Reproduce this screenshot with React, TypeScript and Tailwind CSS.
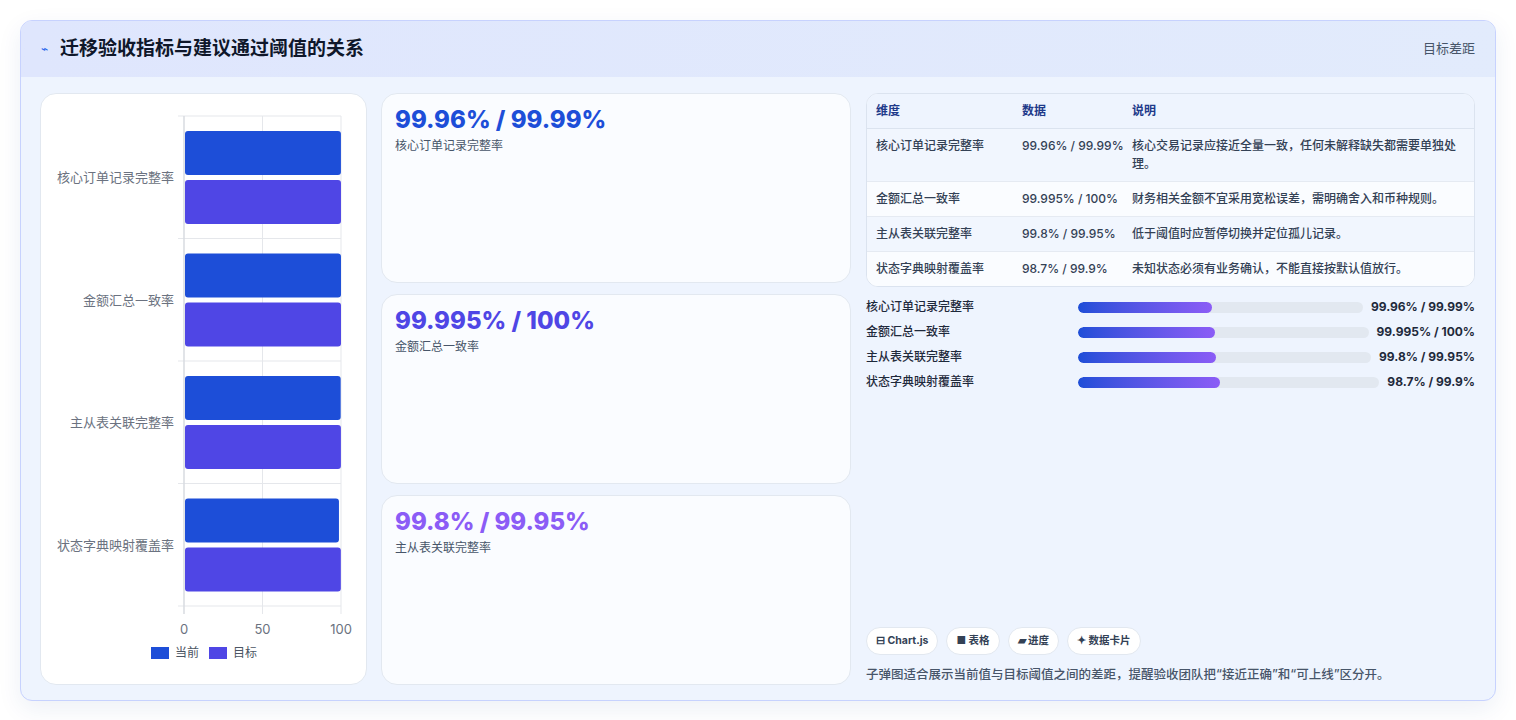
const metrics = [
  { name: '核心订单记录完整率', cur: 99.96, tgt: 99.99, data: '99.96% / 99.99%', note: '核心交易记录应接近全量一致，任何未解释缺失都需要单独处理。' },
  { name: '金额汇总一致率', cur: 99.995, tgt: 100, data: '99.995% / 100%', note: '财务相关金额不宜采用宽松误差，需明确舍入和币种规则。' },
  { name: '主从表关联完整率', cur: 99.8, tgt: 99.95, data: '99.8% / 99.95%', note: '低于阈值时应暂停切换并定位孤儿记录。' },
  { name: '状态字典映射覆盖率', cur: 98.7, tgt: 99.9, data: '98.7% / 99.9%', note: '未知状态必须有业务确认，不能直接按默认值放行。' },
]

const font = { fontFamily: 'Inter, "Noto Sans CJK SC", sans-serif' }

function BarChart() {
  const x0 = 143, x1 = 300
  const top = 22, group = 122.5
  const sx = (v: number) => x0 + ((x1 - x0) * v) / 100
  return (
    <svg width="326" height="590" className="block">
      {[0, 50, 100].map((t) => (
        <line key={t} x1={sx(t)} x2={sx(t)} y1={top} y2={top + group * 4 + 8} stroke="#e5e7eb" />
      ))}
      {[0, 1, 2, 3, 4].map((i) => (
        <line key={i} x1={x0 - 6} x2={x1} y1={top + group * i} y2={top + group * i} stroke="#e5e7eb" />
      ))}
      <line x1={x0} x2={x0} y1={top} y2={top + group * 4 + 8} stroke="#d1d5db" />
      {metrics.map((m, i) => {
        const y = top + group * i
        return (
          <g key={m.name}>
            <rect x={x0 + 1} y={y + 15} width={sx(m.cur) - x0 - 1} height={44} rx={3} fill="#1d4ed8" />
            <rect x={x0 + 1} y={y + 64} width={sx(m.tgt) - x0 - 1} height={44} rx={3} fill="#4f46e5" />
            <text x={x0 - 10} y={y + 66} textAnchor="end" fontSize="13" fill="#6b7280" style={font}>{m.name}</text>
          </g>
        )
      })}
      {[0, 50, 100].map((t) => (
        <text key={t} x={sx(t)} y={top + group * 4 + 28} textAnchor="middle" fontSize="13" fill="#6b7280" style={font}>{t}</text>
      ))}
      <rect x={110} y={553} width={18} height={12} fill="#1d4ed8" />
      <text x={134} y={563} fontSize="12" fill="#4b5563" style={font}>当前</text>
      <rect x={168} y={553} width={18} height={12} fill="#4f46e5" />
      <text x={192} y={563} fontSize="12" fill="#4b5563" style={font}>目标</text>
    </svg>
  )
}

const cardColors = ['text-[#1d4ed8]', 'text-[#4f46e5]', 'text-[#8b5cf6]']

export default function App() {
  return (
    <div className="bg-white w-[1516px] h-[720px] pt-5 px-5" style={font}>
      <div className="w-[1476px] h-[681px] rounded-xl border border-[#c7d2fe] bg-[#eef4fe] overflow-hidden flex flex-col shadow-[0_8px_24px_rgba(30,58,138,0.08)]">
        <div className="h-[56px] shrink-0 flex items-center justify-between px-5 bg-gradient-to-r from-[#dfe6fd] to-[#e2ebfc]">
          <div className="flex items-center gap-3">
            <span className="text-[#2563eb] text-[12px]">⌁</span>
            <h1 className="text-[19px] font-bold text-[#0f172a]">迁移验收指标与建议通过阈值的关系</h1>
          </div>
          <span className="text-[13px] text-[#475569]">目标差距</span>
        </div>
        <div className="flex-1 flex gap-[14px] pl-[19px] pr-5 pt-4 pb-[18px]">
          <div className="w-[327px] bg-white rounded-2xl border border-[#e2e8f0] overflow-hidden">
            <BarChart />
          </div>
          <div className="w-[470px] flex flex-col gap-[11px]">
            {metrics.slice(0, 3).map((m, i) => (
              <div key={m.name} className="flex-1 bg-[#fafcff] rounded-2xl border border-[#e2e8f0] px-[13px] pt-[11px]">
                <div className={`text-[24px] leading-[30px] font-extrabold ${cardColors[i]}`}>{m.data}</div>
                <div className="text-[12px] text-[#475569] mt-0.5">{m.name}</div>
              </div>
            ))}
          </div>
          <div className="flex-1 flex flex-col pl-[1px]">
            <div className="rounded-xl border border-[#dbe3ef] bg-white overflow-hidden">
              <table className="w-full text-[12px] text-left table-fixed">
                <thead>
                  <tr className="bg-[#eef4fe] text-[#1e3a8a] font-bold border-b border-[#dbe3ef]">
                    <th className="py-[8px] pl-[9px] w-[155px]">维度</th>
                    <th className="py-[8px] w-[110px]">数据</th>
                    <th className="py-[8px] pr-3">说明</th>
                  </tr>
                </thead>
                <tbody className="text-[#334155] font-medium">
                  {metrics.map((m, i) => (
                    <tr key={m.name} className={`${i % 2 === 0 ? 'bg-[#f1f6fe]' : 'bg-[#fafcff]'} border-t border-[#e5eaf2] leading-[18px]`}>
                      <td className="py-[8px] pl-[9px] align-top">{m.name}</td>
                      <td className="py-[8px] align-top pr-2">{m.data}</td>
                      <td className="py-[8px] align-top pr-4">{m.note}</td>
                    </tr>
                  ))}
                </tbody>
              </table>
            </div>
            <div className="mt-[12px] flex flex-col gap-[9px]">
              {metrics.map((m) => (
                <div key={m.name} className="flex items-center h-[16px] text-[12px] text-[#1e293b]">
                  <span className="w-[212px] shrink-0 font-medium">{m.name}</span>
                  <div className="flex-1 h-[11px] rounded-full bg-[#e2e8f0] overflow-hidden">
                    <div className="h-full w-[47%] rounded-full bg-gradient-to-r from-[#1d4ed8] to-[#8b5cf6]" />
                  </div>
                  <span className="ml-2 font-bold">{m.data}</span>
                </div>
              ))}
            </div>
            <div className="mt-auto flex gap-2">
              {['⊟ Chart.js', '■ 表格', '▰ 进度', '✦ 数据卡片'].map((c) => (
                <span key={c} className="h-[28px] px-[9px] flex items-center rounded-full bg-white border border-[#e2e8f0] text-[10.5px] font-bold text-[#334155]">{c}</span>
              ))}
            </div>
            <p className="mt-[11px] text-[12.5px] text-[#475569] font-medium">子弹图适合展示当前值与目标阈值之间的差距，提醒验收团队把“接近正确”和“可上线”区分开。</p>
          </div>
        </div>
      </div>
    </div>
  )
}
